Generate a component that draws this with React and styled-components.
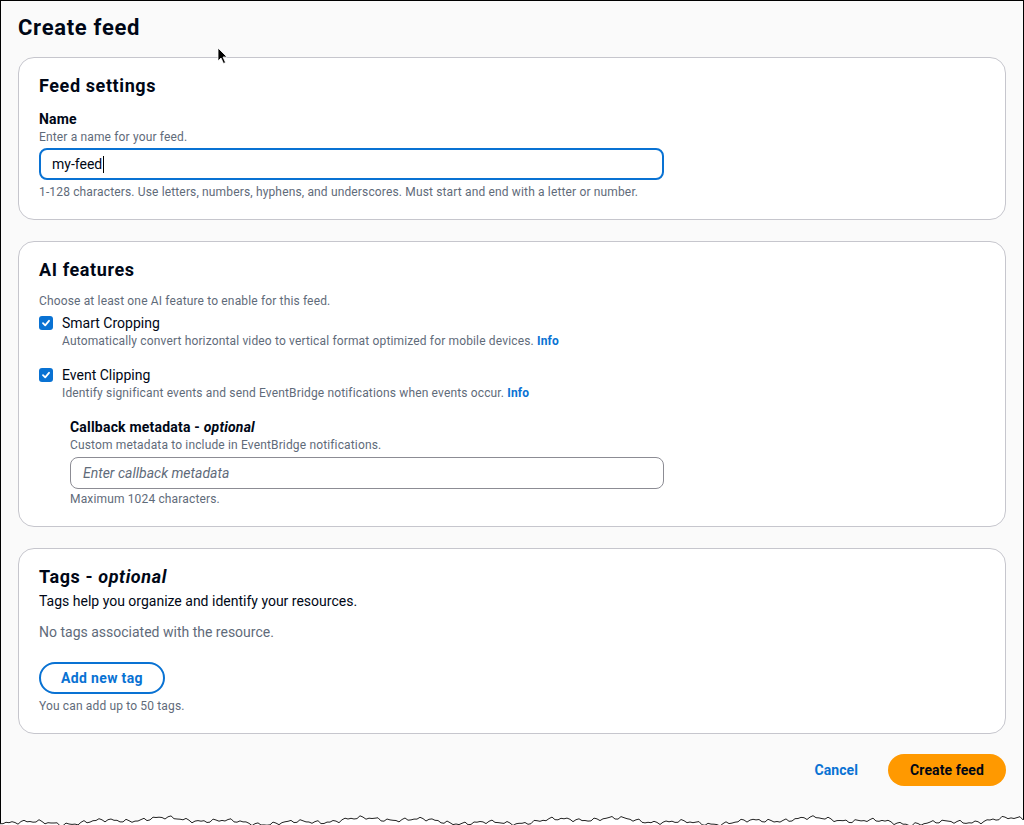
import React from "react";
import styled, { createGlobalStyle } from "styled-components";

const GlobalStyle = createGlobalStyle`
  html, body { margin: 0; padding: 0; background: #ffffff; }
  body { font-family: Roboto, "Open Sans", Arial, sans-serif; color: #000716; }
  * { box-sizing: border-box; }
`;

const Wrapper = styled.div`
  width: 1024px;
  position: relative;
`;

const Frame = styled.div`
  background: #fafafa;
  border: 1px solid #000;
  border-bottom: none;
  padding: 13px 17px 24px 17px;
  display: flex;
  flex-direction: column;
`;

const PageTitle = styled.h1`
  margin: 0 0 15px 0;
  font-size: 22px;
  line-height: 28px;
  font-weight: 700;
  letter-spacing: 0.7px;
  color: #000716;
`;

const Card = styled.section`
  background: #fff;
  border: 1px solid #c6c6cd;
  border-radius: 16px;
  padding: 17px 20px 19px 20px;
  display: flex;
  flex-direction: column;
  & + & { margin-top: 21px; }
`;

const CardTitle = styled.h2`
  margin: 0;
  font-size: 18px;
  line-height: 22px;
  font-weight: 700;
  letter-spacing: 0.6px;
  color: #000716;
  i { font-weight: 700; }
`;

const Label = styled.div`
  font-size: 14px;
  line-height: 20px;
  font-weight: 700;
  letter-spacing: 0.2px;
  color: #000716;
  margin-top: ${(p) => p.$mt || 0}px;
  i { font-weight: 700; }
`;

const Hint = styled.div`
  font-size: 12px;
  line-height: 16px;
  letter-spacing: 0.15px;
  color: #5f6b7a;
  margin-top: ${(p) => p.$mt || 0}px;
`;

const Body = styled.div`
  font-size: 14px;
  line-height: 20px;
  color: ${(p) => (p.$muted ? "#5f6b7a" : "#000716")};
  margin-top: ${(p) => p.$mt || 0}px;
`;

const Input = styled.div`
  width: ${(p) => p.$w}px;
  height: 32px;
  margin-top: ${(p) => p.$mt || 0}px;
  border: ${(p) => (p.$focus ? "2px solid #0972d3" : "1px solid #8c8c94")};
  border-radius: 8px;
  background: #fff;
  display: flex;
  align-items: center;
  padding-left: ${(p) => (p.$focus ? 11 : 12)}px;
  font-size: 14px;
  color: ${(p) => (p.$placeholder ? "#5f6b7a" : "#000716")};
  font-style: ${(p) => (p.$placeholder ? "italic" : "normal")};
`;

const Caret = styled.span`
  display: inline-block;
  width: 1px;
  height: 17px;
  background: #000;
  margin-left: 1px;
`;

const CheckRow = styled.div`
  display: flex;
  align-items: flex-start;
  gap: 9px;
  margin-top: ${(p) => p.$mt || 0}px;
`;

const Box = styled.span`
  width: 14px;
  height: 14px;
  margin-top: 3px;
  border-radius: 3px;
  background: #0972d3;
  display: flex;
  align-items: center;
  justify-content: center;
  flex: none;
`;

const CheckText = styled.div`
  display: flex;
  flex-direction: column;
`;

const CheckLabel = styled.div`
  font-size: 14px;
  line-height: 20px;
  color: #000716;
`;

const InfoLink = styled.a`
  color: #0972d3;
  font-weight: 700;
  text-decoration: none;
`;

const Nested = styled.div`
  padding-left: 31px;
  margin-top: 16px;
  display: flex;
  flex-direction: column;
`;

const OutlineButton = styled.button`
  align-self: flex-start;
  margin-top: 20px;
  height: 32px;
  padding: 0 20px;
  border: 2px solid #0972d3;
  border-radius: 20px;
  background: #fff;
  color: #0972d3;
  font-family: inherit;
  font-size: 14px;
  font-weight: 700;
  letter-spacing: 0.35px;
`;

const Footer = styled.div`
  margin-top: 20px;
  display: flex;
  justify-content: flex-end;
  align-items: center;
  gap: 8px;
`;

const LinkButton = styled.button`
  height: 32px;
  padding: 0 22px;
  border: none;
  background: transparent;
  color: #0972d3;
  font-family: inherit;
  font-size: 14px;
  font-weight: 700;
  letter-spacing: 0.1px;
`;

const PrimaryButton = styled.button`
  height: 32px;
  padding: 0 22px;
  border: none;
  border-radius: 20px;
  background: #ff9900;
  color: #000716;
  font-family: inherit;
  font-size: 14px;
  font-weight: 700;
  letter-spacing: 0.1px;
`;

const Cursor = styled.svg`
  position: absolute;
  left: 217px;
  top: 47px;
`;

const TornSvg = styled.svg`
  display: block;
`;

function buildEdge() {
  const pts = [];
  for (let x = 0; x <= 1024; x += 3) {
    const n =
      Math.sin(x * 0.029) * 2.2 +
      Math.sin(x * 0.097 + 1.3) * 1.5 +
      Math.sin(x * 0.43 + 0.4) * 1.1 +
      Math.sin(x * 1.37 + 2.1) * 0.9;
    const y = 11 + n;
    pts.push([x, Math.max(4, Math.min(16, y)).toFixed(1)]);
  }
  return pts;
}
const EDGE = buildEdge();

function TornEdge() {
  const line = EDGE.map((p) => p.join(",")).join(" ");
  const fill = `0.5,0 ${line} 1023.5,0`;
  return (
    <TornSvg width="1024" height="17" viewBox="0 0 1024 17">
      <polygon points={fill} fill="#fafafa" />
      <line x1="0.5" y1="0" x2="0.5" y2={EDGE[0][1]} stroke="#000" />
      <line x1="1023.5" y1="0" x2="1023.5" y2={EDGE[EDGE.length - 1][1]} stroke="#000" />
      <polyline points={line} fill="none" stroke="#222" strokeWidth="1" />
    </TornSvg>
  );
}

function Check() {
  return (
    <Box>
      <svg width="10" height="10" viewBox="0 0 10 10">
        <path d="M2 5.2 L4.2 7.3 L8 2.8" fill="none" stroke="#fff" strokeWidth="1.8" strokeLinecap="round" strokeLinejoin="round" />
      </svg>
    </Box>
  );
}

export default function App() {
  return (
    <Wrapper>
      <GlobalStyle />
      <Frame>
        <PageTitle>Create feed</PageTitle>

        <Card>
          <CardTitle>Feed settings</CardTitle>
          <Label $mt={12}>Name</Label>
          <Hint>Enter a name for your feed.</Hint>
          <Input $w={625} $mt={3} $focus>
            my-feed<Caret />
          </Input>
          <Hint $mt={4}>
            1-128 characters. Use letters, numbers, hyphens, and underscores. Must start and end with a letter or number.
          </Hint>
        </Card>

        <Card>
          <CardTitle>AI features</CardTitle>
          <Hint $mt={12}>Choose at least one AI feature to enable for this feed.</Hint>
          <CheckRow $mt={4}>
            <Check />
            <CheckText>
              <CheckLabel>Smart Cropping</CheckLabel>
              <Hint>
                Automatically convert horizontal video to vertical format optimized for mobile devices.{" "}
                <InfoLink>Info</InfoLink>
              </Hint>
            </CheckText>
          </CheckRow>
          <CheckRow $mt={16}>
            <Check />
            <CheckText>
              <CheckLabel>Event Clipping</CheckLabel>
              <Hint>
                Identify significant events and send EventBridge notifications when events occur.{" "}
                <InfoLink>Info</InfoLink>
              </Hint>
            </CheckText>
          </CheckRow>
          <Nested>
            <Label>
              Callback metadata - <i>optional</i>
            </Label>
            <Hint>Custom metadata to include in EventBridge notifications.</Hint>
            <Input $w={594} $mt={4} $placeholder>
              Enter callback metadata
            </Input>
            <Hint $mt={2}>Maximum 1024 characters.</Hint>
          </Nested>
        </Card>

        <Card>
          <CardTitle>
            Tags - <i>optional</i>
          </CardTitle>
          <Body $mt={3}>Tags help you organize and identify your resources.</Body>
          <Body $mt={11} $muted>No tags associated with the resource.</Body>
          <OutlineButton>Add new tag</OutlineButton>
          <Hint $mt={4}>You can add up to 50 tags.</Hint>
        </Card>

        <Footer>
          <LinkButton>Cancel</LinkButton>
          <PrimaryButton>Create feed</PrimaryButton>
        </Footer>
      </Frame>
      <TornEdge />
      <Cursor width="12" height="18" viewBox="0 0 12 18">
        <path d="M1 1 L1 14 L4 11 L6.5 16.5 L8.5 15.5 L6 10 L10 10 Z" fill="#000" stroke="#fff" strokeWidth="0.8" />
      </Cursor>
    </Wrapper>
  );
}
